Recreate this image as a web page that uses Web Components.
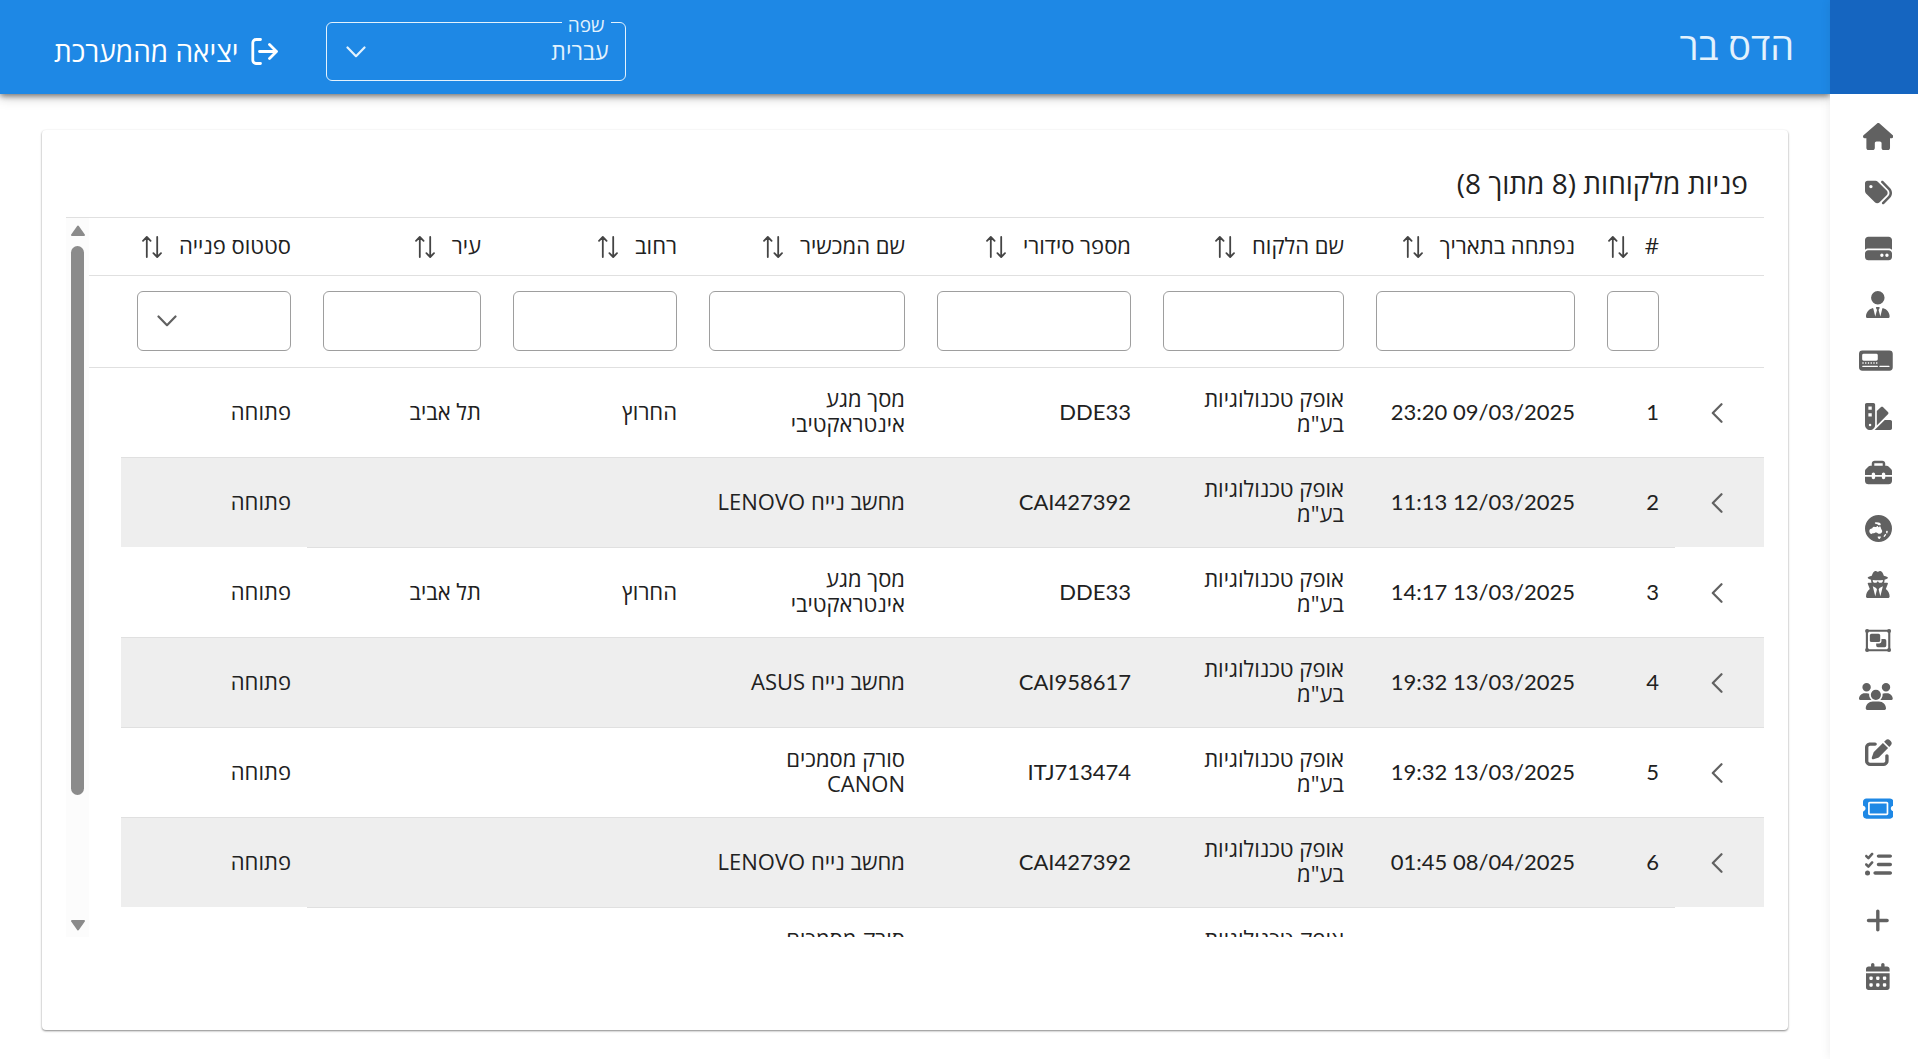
<!DOCTYPE html>
<html lang="he" dir="rtl">
<head>
<meta charset="utf-8">
<title>פניות מלקוחות</title>
<style>
body {
    margin: 0;
    font-family: "Open Sans", "Noto Sans", sans-serif;
    font-size: 22px;
    line-height: 25px;
    color: #212121;
    background: #fff;
}
</style>
</head>
<body>
<app-shell>
    <side-menu slot="menu"></side-menu>
    <top-bar slot="bar" user="הדס בר"></top-bar>
    <content-card heading="פניות מלקוחות (8 מתוך 8)">
        <ticket-table></ticket-table>
    </content-card>
</app-shell>

<script>
// name: [width, height, markup]; everything is painted with currentColor
const icons = {
    home: [576, 512, '<path d="M575.8 255.5c0 18-15 32.1-32 32.1h-32l.7 160.2c0 2.7-.2 5.4-.5 8.1V472c0 22.1-17.9 40-40 40H456c-1.1 0-2.2 0-3.3-.1c-1.4 .1-2.8 .1-4.2 .1H416 392c-22.1 0-40-17.9-40-40V448 384c0-17.7-14.3-32-32-32H256c-17.7 0-32 14.3-32 32v64 24c0 22.1-17.9 40-40 40H160 128.1c-1.5 0-3-.1-4.5-.2c-1.2 .1-2.4 .2-3.6 .2H104c-22.1 0-40-17.9-40-40V360c0-.9 0-1.9 .1-2.8V287.6H32c-18 0-32-14-32-32.1c0-9 3-17 10-24L266.4 8c7-7 15-8 22-8s15 2 21 7L564.8 231.5c8 7 12 15 11 24z"/>'],
    tags: [512, 512, '<path d="M345 39.1L472.8 168.4c52.4 53 52.4 138.2 0 191.2L360.8 472.9c-9.3 9.4-24.5 9.5-33.9 .2s-9.5-24.5-.2-33.9L438.6 325.9c33.9-34.3 33.9-89.4 0-123.7L310.9 72.9c-9.3-9.4-9.2-24.6 .2-33.9s24.6-9.2 33.9 .2zM0 229.5V80C0 53.5 21.5 32 48 32H197.5c17 0 33.3 6.7 45.3 18.7l168 168c25 25 25 65.5 0 90.5L277.3 442.7c-25 25-65.5 25-90.5 0l-168-168C6.7 262.7 0 246.5 0 229.5zM144 144a32 32 0 1 0 -64 0 32 32 0 1 0 64 0z"/>'],
    drive: [512, 512, '<path d="M0 96C0 60.7 28.7 32 64 32H448c35.3 0 64 28.7 64 64V280.4c-17-15.2-39.4-24.4-64-24.4H64c-24.6 0-47 9.2-64 24.4V96zM64 288H448c35.3 0 64 28.7 64 64v64c0 35.3-28.7 64-64 64H64c-35.3 0-64-28.7-64-64V352c0-35.3 28.7-64 64-64zM320 416a32 32 0 1 0 0-64 32 32 0 1 0 0 64zm128-32a32 32 0 1 0 -64 0 32 32 0 1 0 64 0z"/>'],
    tie: [448, 512, '<path d="M96 128a128 128 0 1 0 256 0A128 128 0 1 0 96 128zm94.5 200.2l18.6 31L175.8 483.1l-36-146.9c-2-8.1-9.8-13.4-17.9-11.3C51.9 342.4 0 405.8 0 481.3c0 17 13.8 30.7 30.7 30.7H162.5c0 0 0 0 .1 0H168 280h5.5c0 0 0 0 .1 0H417.3c17 0 30.7-13.8 30.7-30.7c0-75.5-51.9-138.9-121.9-156.4c-8.1-2-15.9 3.3-17.9 11.3l-36 146.9L238.9 359.2l18.6-31c6.4-10.7-1.3-24.2-13.7-24.2H224 204.3c-12.4 0-20.1 13.6-13.7 24.2z"/>'],
    device: [640, 512, '<path fill-rule="evenodd" d="M64 64H576a64 64 0 0 1 64 64V384a64 64 0 0 1-64 64H64a64 64 0 0 1-64-64V128a64 64 0 0 1 64-64zM88 128a28 28 0 0 0-28 28v76a28 28 0 0 0 28 28H328a28 28 0 0 0 28-28v-76a28 28 0 0 0-28-28zM64 288h24v28H64zm52 0h24v28h-24zm52 0h24v28h-24zm52 0h24v28h-24zm52 0h24v28h-24zm52 0h24v28h-24zM72 354a12 12 0 0 0 0 26H348a12 12 0 0 0 0-26zm324 0a12 12 0 0 0 0 26H568a12 12 0 0 0 0-26z"/>'],
    swatch: [512, 512, '<path d="M0 32C0 14.3 14.3 0 32 0H160c17.7 0 32 14.3 32 32V416c0 53-43 96-96 96s-96-43-96-96V32zM223.6 425.9c.3-3.3 .4-6.6 .4-9.9V154l75.4-75.4c12.5-12.5 32.8-12.5 45.3 0l90.5 90.5c12.5 12.5 12.5 32.8 0 45.3L223.6 425.9zM182.8 512l192-192H480c17.7 0 32 14.3 32 32V480c0 17.7-14.3 32-32 32H182.8zM128 64H64v64h64V64zM64 192v64h64V192H64zM96 440a24 24 0 1 0 0-48 24 24 0 1 0 0 48z"/>'],
    toolbox: [512, 512, '<path d="M176 88v40H336V88c0-4.4-3.6-8-8-8H184c-4.4 0-8 3.6-8 8zm-48 40V88c0-30.9 25.1-56 56-56H328c30.9 0 56 25.1 56 56v40h28.1c12.7 0 24.9 5.1 33.9 14.1l51.9 51.9c9 9 14.1 21.2 14.1 33.9V304H384V288c0-17.7-14.3-32-32-32s-32 14.3-32 32v16H192V288c0-17.7-14.3-32-32-32s-32 14.3-32 32v16H0V227.9c0-12.7 5.1-24.9 14.1-33.9l51.9-51.9c9-9 21.2-14.1 33.9-14.1H128zM0 416V336H128v16c0 17.7 14.3 32 32 32s32-14.3 32-32V336H320v16c0 17.7 14.3 32 32 32s32-14.3 32-32V336H512v80c0 35.3-28.7 64-64 64H64c-35.3 0-64-28.7-64-64z"/>'],
    globe: [512, 512, '<path fill-rule="evenodd" d="M256 0a256 256 0 1 1 0 512a256 256 0 1 1 0-512zM186 150c0-10 10-14 22-12l52 6c20 4 34 14 38 30c2 10-4 18-14 20l-24-2c-12 0-16-14-28-18l-34-8c-8-2-12-8-12-16zM84 290c6-18 24-26 44-32c16-6 18-30 40-34c20-4 24 10 42 4c10-4 16-20 28-18s10 24 24 24c10 0 10-24 22-22c16 4 16 44 32 66c12 16 12 34 4 50c-12 22-36 30-62 28c-18-2-24-20-44-22c-22-2-36 14-60 14c-14 0-20 14-36 12c-26-4-42-44-34-70zM250 410h40c10 0 14 10 8 18l-16 24c-8 8-20 6-24-4l-16-22c-4-8 0-16 8-16zM412 300c10-4 22 0 20 12l-8 32c-4 10-20 8-22-2l-2-26c0-8 4-14 12-16zM394 362c10 4 8 14 2 22l-24 30c-8 8-22 2-20-10c2-10 26-46 42-42z"/>'],
    secret: [448, 512, '<path d="M224 16c-6.7 0-10.8-2.8-15.5-6.1C201.9 5.4 194 0 176 0c-30.5 0-52 43.7-66 89.4C62.7 98.1 32 112.2 32 128c0 14.3 25 27.1 64.6 35.9c-.4 4-.6 8-.6 12.1c0 17 3.3 33.2 9.3 48H45.4C38 224 32 230 32 237.4c0 1.7 .3 3.4 1 5l38.8 96.9C28.2 371.8 0 423.8 0 482.3C0 498.7 13.3 512 29.7 512H418.3c16.4 0 29.7-13.3 29.7-29.7c0-58.5-28.2-110.4-71.7-143L415 242.4c.6-1.6 1-3.3 1-5c0-7.4-6-13.4-13.4-13.4H342.7c6-14.8 9.3-31 9.3-48c0-4.1-.2-8.1-.6-12.1C391 155.1 416 142.3 416 128c0-15.8-30.7-29.9-78-38.6C324 43.7 302.5 0 272 0c-18 0-25.9 5.4-32.5 9.9c-4.8 3.3-8.8 6.1-15.5 6.1zm56 208H267.6c-16.5 0-31.1-10.6-36.3-26.2c-2.3-7-12.2-7-14.5 0c-5.2 15.6-19.9 26.2-36.3 26.2H168c-22.1 0-40-17.9-40-40V169.6c28.2 4.1 61 6.4 96 6.4s67.8-2.3 96-6.4V184c0 22.1-17.9 40-40 40zm-88 96l16 32L176 480 128 288l64 32zm128-32L272 480 240 352l16-32 64-32z"/>'],
    group: [512, 512, '<path fill="none" stroke="currentColor" stroke-width="40" d="M36 72H460V440H36z"/><circle cx="40" cy="76" r="38"/><circle cx="456" cy="76" r="38"/><circle cx="40" cy="436" r="38"/><circle cx="456" cy="436" r="38"/><rect x="92" y="130" width="196" height="156" rx="32"/><path d="M312 228h60a32 32 0 0 1 32 32v92a32 32 0 0 1-32 32H244a32 32 0 0 1-32-32v-40h60a40 40 0 0 0 40-40z"/>'],
    users: [640, 512, '<path d="M144 0a80 80 0 1 1 0 160A80 80 0 1 1 144 0zM512 0a80 80 0 1 1 0 160A80 80 0 1 1 512 0zM0 298.7C0 239.8 47.8 192 106.7 192h42.7c15.9 0 31 3.5 44.6 9.7c-1.3 7.2-1.9 14.7-1.9 22.3c0 38.2 16.8 72.5 43.3 96c-.2 0-.4 0-.7 0H21.3C9.6 320 0 310.4 0 298.7zM405.3 320c-.2 0-.4 0-.7 0c26.6-23.5 43.3-57.8 43.3-96c0-7.6-.7-15-1.9-22.3c13.6-6.3 28.7-9.7 44.6-9.7h42.7C592.2 192 640 239.8 640 298.7c0 11.8-9.6 21.3-21.3 21.3H405.3zM224 224a96 96 0 1 1 192 0 96 96 0 1 1 -192 0zM128 485.3C128 411.7 187.7 352 261.3 352H378.7C452.3 352 512 411.7 512 485.3c0 14.7-11.9 26.7-26.7 26.7H154.7c-14.7 0-26.7-11.9-26.7-26.7z"/>'],
    edit: [512, 512, '<path d="M471.6 21.7c-21.9-21.9-57.3-21.9-79.2 0L362.3 51.7l97.9 97.9 30.1-30.1c21.9-21.9 21.9-57.3 0-79.2L471.6 21.7zm-299.2 220c-6.1 6.1-10.8 13.6-13.5 21.9l-29.6 88.8c-2.9 8.6-.6 18.1 5.8 24.6s15.9 8.7 24.6 5.8l88.8-29.6c8.2-2.7 15.7-7.4 21.9-13.5L437.7 172.3 339.7 74.3 172.4 241.7zM96 64C43 64 0 107 0 160V416c0 53 43 96 96 96H352c53 0 96-43 96-96V320c0-17.7-14.3-32-32-32s-32 14.3-32 32v96c0 17.7-14.3 32-32 32H96c-17.7 0-32-14.3-32-32V160c0-17.7 14.3-32 32-32h96c17.7 0 32-14.3 32-32s-14.3-32-32-32H96z"/>'],
    ticket: [576, 512, '<path fill-rule="evenodd" d="M64 64C28.7 64 0 92.7 0 128v64c0 8.8 7.4 15.7 15.7 18.6C34.5 217.1 48 235 48 256s-13.5 38.9-32.3 45.4C7.4 304.3 0 311.2 0 320v64c0 35.3 28.7 64 64 64H512c35.3 0 64-28.7 64-64V320c0-8.8-7.4-15.7-15.7-18.6C541.5 294.9 528 277 528 256s13.5-38.9 32.3-45.4c8.3-2.9 15.7-9.8 15.7-18.6V128c0-35.3-28.7-64-64-64H64zm64 96V352H448V160zM96 160c0-17.7 14.3-32 32-32H448c17.7 0 32 14.3 32 32V352c0 17.7-14.3 32-32 32H128c-17.7 0-32-14.3-32-32V160z"/>'],
    checks: [512, 512, '<path d="M152.1 38.2c9.9 8.9 10.7 24 1.8 33.9l-72 80c-4.4 4.9-10.6 7.8-17.2 7.9s-12.9-2.4-17.6-7L7 113C-2.3 103.6-2.3 88.4 7 79s24.6-9.4 33.9 0l22.1 22.1 55.1-61.2c8.9-9.9 24-10.7 33.9-1.8zm0 160c9.9 8.9 10.7 24 1.8 33.9l-72 80c-4.4 4.9-10.6 7.8-17.2 7.9s-12.9-2.4-17.6-7L7 273c-9.4-9.4-9.4-24.6 0-33.9s24.6-9.4 33.9 0l22.1 22.1 55.1-61.2c8.9-9.9 24-10.7 33.9-1.8zM224 96c0-17.7 14.3-32 32-32H480c17.7 0 32 14.3 32 32s-14.3 32-32 32H256c-17.7 0-32-14.3-32-32zm0 160c0-17.7 14.3-32 32-32H480c17.7 0 32 14.3 32 32s-14.3 32-32 32H256c-17.7 0-32-14.3-32-32zM160 416c0-17.7 14.3-32 32-32H480c17.7 0 32 14.3 32 32s-14.3 32-32 32H192c-17.7 0-32-14.3-32-32zM48 368a48 48 0 1 1 0 96 48 48 0 1 1 0-96z"/>'],
    plus: [448, 512, '<path d="M256 80c0-17.7-14.3-32-32-32s-32 14.3-32 32V224H48c-17.7 0-32 14.3-32 32s14.3 32 32 32H192V432c0 17.7 14.3 32 32 32s32-14.3 32-32V288H400c17.7 0 32-14.3 32-32s-14.3-32-32-32H256V80z"/>'],
    calendar: [448, 512, '<path d="M128 0c17.7 0 32 14.3 32 32V64H288V32c0-17.7 14.3-32 32-32s32 14.3 32 32V64h48c26.5 0 48 21.5 48 48v48H0V112C0 85.5 21.5 64 48 64H96V32c0-17.7 14.3-32 32-32zM0 192H448V464c0 26.5-21.5 48-48 48H48c-26.5 0-48-21.5-48-48V192zm64 80v32c0 8.8 7.2 16 16 16h32c8.8 0 16-7.2 16-16V272c0-8.8-7.2-16-16-16H80c-8.8 0-16 7.2-16 16zm128 0v32c0 8.8 7.2 16 16 16h32c8.8 0 16-7.2 16-16V272c0-8.8-7.2-16-16-16H208c-8.8 0-16 7.2-16 16zm144-16c-8.8 0-16 7.2-16 16v32c0 8.8 7.2 16 16 16h32c8.8 0 16-7.2 16-16V272c0-8.8-7.2-16-16-16H336zM64 400v32c0 8.8 7.2 16 16 16h32c8.8 0 16-7.2 16-16V400c0-8.8-7.2-16-16-16H80c-8.8 0-16 7.2-16 16zm144-16c-8.8 0-16 7.2-16 16v32c0 8.8 7.2 16 16 16h32c8.8 0 16-7.2 16-16V400c0-8.8-7.2-16-16-16H208zm112 16v32c0 8.8 7.2 16 16 16h32c8.8 0 16-7.2 16-16V400c0-8.8-7.2-16-16-16H336c-8.8 0-16 7.2-16 16z"/>'],
    logout: [27, 27, '<path fill="none" stroke="currentColor" stroke-width="2.8" stroke-linecap="round" stroke-linejoin="round" d="M9.5 1.5H5A3.2 3.2 0 0 0 1.8 4.7V22.3A3.2 3.2 0 0 0 5 25.5H9.5M8.5 13.5H25.5M18.5 6.5l7 7-7 7"/>'],
    down: [20, 12, '<path fill="none" stroke="currentColor" stroke-width="2.2" stroke-linecap="round" stroke-linejoin="round" d="M1.5 1.5L10 10.2L18.5 1.5"/>'],
    back: [12, 20, '<path fill="none" stroke="currentColor" stroke-width="2.2" stroke-linecap="round" stroke-linejoin="round" d="M10.5 1.2L1.8 10L10.5 18.8"/>'],
    sort: [20, 22, '<path fill="none" stroke="currentColor" stroke-width="1.8" stroke-linecap="round" stroke-linejoin="round" d="M4.8 21V1.2M1 4.8L4.8 1L8.6 4.8M15.2 1V20.8M11.4 17.2L15.2 21L19 17.2"/>'],
};

class AppIcon extends HTMLElement {
    connectedCallback() {
        const [w, h, body] = icons[this.getAttribute('name')];
        this.attachShadow({mode: 'open'}).innerHTML = `
<style>
:host { display: inline-flex; flex: none; height: 27px; }
svg { display: block; height: 100%; fill: currentColor; }
</style>
<svg viewBox="0 0 ${w} ${h}" aria-hidden="true">${body}</svg>`;
    }
}
customElements.define('app-icon', AppIcon);

class AppShell extends HTMLElement {
    connectedCallback() {
        this.attachShadow({mode: 'open'}).innerHTML = `
<style>
:host { display: grid; grid-template-columns: 88px minmax(0, 1fr); min-height: 100vh; }
.page { display: flex; flex-direction: column; }
main { display: flex; flex: 1; padding: 36px 42px 29px; }
::slotted(content-card) { flex: 1; min-width: 0; }
</style>
<slot name="menu"></slot>
<div class="page">
    <slot name="bar"></slot>
    <main><slot></slot></main>
</div>`;
    }
}
customElements.define('app-shell', AppShell);

class SideMenu extends HTMLElement {
    items = [
        ['home', 'בית'], ['tags', 'תגיות'], ['drive', 'מכשירים'], ['tie', 'לקוחות'],
        ['device', 'דגמים'], ['swatch', 'קטלוג'], ['toolbox', 'כלים'], ['globe', 'אזורים'],
        ['secret', 'סוכנים'], ['group', 'קבוצות'], ['users', 'משתמשים'], ['edit', 'עריכה'],
        ['ticket', 'פניות'], ['checks', 'משימות'], ['plus', 'חדש'], ['calendar', 'יומן'],
    ];

    connectedCallback() {
        this.attachShadow({mode: 'open'}).innerHTML = `
<style>
:host {
    display: block;
    position: relative;
    z-index: 2;
    background: #fff;
    box-shadow: 0 0 10px rgba(0, 0, 0, .08);
    color: #616161;
}
.brand { height: 94px; background: #1565c0; }
nav { display: flex; flex-direction: column; padding: 14px 25px; }
a {
    display: flex;
    justify-content: safe center;
    align-items: center;
    width: 30px;
    height: 56px;
    color: inherit;
}
a[aria-current] { color: #1e88e5; }
</style>
<div class="brand"></div>
<nav>
${this.items.map(([icon, label]) => `<a href="#${icon}" aria-label="${label}"${icon === 'ticket' ? ' aria-current="page"' : ''}><app-icon name="${icon}"></app-icon></a>`).join('')}
</nav>`;
    }
}
customElements.define('side-menu', SideMenu);

class TopBar extends HTMLElement {
    connectedCallback() {
        this.attachShadow({mode: 'open'}).innerHTML = `
<style>
:host {
    display: flex;
    align-items: center;
    gap: 48px;
    height: 94px;
    padding: 0 36px 0 54px;
    background: #1e88e5;
    color: #fff;
    box-shadow: 0 2px 6px rgba(0, 0, 0, .5), 0 4px 12px rgba(0, 0, 0, .15);
}
.user { flex: 1; padding-bottom: 4px; font-size: 38px; color: #e3f2fd; }
button {
    display: flex;
    align-items: center;
    gap: 12px;
    padding: 8px 0 0;
    border: 0;
    background: none;
    color: inherit;
    font: inherit;
    font-size: 28px;
}
</style>
<div class="user">${this.getAttribute('user')}</div>
<language-select></language-select>
<button type="button"><app-icon name="logout"></app-icon><span>יציאה מהמערכת</span></button>`;
    }
}
customElements.define('top-bar', TopBar);

class LanguageSelect extends HTMLElement {
    connectedCallback() {
        this.attachShadow({mode: 'open'}).innerHTML = `
<style>
:host { display: block; position: relative; width: 300px; margin-top: 9px; color: #e3f2fd; }
select {
    display: block;
    box-sizing: border-box;
    width: 100%;
    height: 59px;
    padding: 0 16px 0 50px;
    border: 1px solid #e3f2fd;
    border-radius: 6px;
    background: none;
    color: inherit;
    font: inherit;
    font-size: 23px;
    appearance: none;
}
label {
    position: absolute;
    top: -9px;
    right: 15px;
    padding: 0 6px;
    background: #1e88e5;
    font-size: 19px;
}
app-icon { position: absolute; left: 20px; top: 24px; height: 12px; pointer-events: none; }
</style>
<label for="lang">שפה</label>
<select id="lang"><option>עברית</option><option>English</option></select>
<app-icon name="down"></app-icon>`;
    }
}
customElements.define('language-select', LanguageSelect);

class ContentCard extends HTMLElement {
    connectedCallback() {
        this.attachShadow({mode: 'open'}).innerHTML = `
<style>
:host {
    display: block;
    box-sizing: border-box;
    padding: 24px;
    border-radius: 4px;
    background: #fff;
    box-shadow: 0 1px 2px rgba(0, 0, 0, .4), 0 1px 3px rgba(0, 0, 0, .1);
}
h1 { margin: 0; padding: 13px 16px 18px; font-size: 28px; font-weight: 400; line-height: 32px; }
</style>
<h1>${this.getAttribute('heading')}</h1>
<slot></slot>`;
    }
}
customElements.define('content-card', ContentCard);

class ScrollRail extends HTMLElement {
    connectedCallback() {
        this.attachShadow({mode: 'open'}).innerHTML = `
<style>
:host {
    display: flex;
    flex-direction: column;
    align-items: center;
    gap: 10px;
    box-sizing: border-box;
    flex: none;
    width: 23px;
    padding: 7px 0 6px;
    background: #fcfcfc;
}
svg { display: block; fill: #8b8b8b; stroke: #8b8b8b; stroke-width: 2; stroke-linejoin: round; }
.thumb { width: 13px; height: 549px; border-radius: 7px; background: #8b8b8b; }
.rest { flex: 1; }
</style>
<svg width="14" height="11"><path d="M7 1.5L1 10H13z"/></svg>
<div class="thumb"></div>
<div class="rest"></div>
<svg width="14" height="11"><path d="M7 9.5L1 1H13z"/></svg>`;
    }
}
customElements.define('scroll-rail', ScrollRail);

const columns = [
    ['#', 84], ['נפתחה בתאריך', 231], ['שם הלקוח', 213], ['מספר סידורי', 226],
    ['שם המכשיר', 228], ['רחוב', 196], ['עיר', 190], ['סטטוס פנייה', 186],
];
const client = 'אופק טכנולוגיות בע"מ';
const tickets = [
    ['1', '09/03/2025 23:20', client, 'DDE33', 'מסך מגע אינטראקטיבי', 'החרוץ', 'תל אביב', 'פתוחה'],
    ['2', '12/03/2025 11:13', client, 'CAI427392', 'מחשב נייח LENOVO', '', '', 'פתוחה'],
    ['3', '13/03/2025 14:17', client, 'DDE33', 'מסך מגע אינטראקטיבי', 'החרוץ', 'תל אביב', 'פתוחה'],
    ['4', '13/03/2025 19:32', client, 'CAI958617', 'מחשב נייח ASUS', '', '', 'פתוחה'],
    ['5', '13/03/2025 19:32', client, 'ITJ713474', 'סורק מסמכים CANON', '', '', 'פתוחה'],
    ['6', '08/04/2025 01:45', client, 'CAI427392', 'מחשב נייח LENOVO', '', '', 'פתוחה'],
    ['7', '', client, '', 'סורק מסמכים CANON', '', '', 'פתוחה'],
];

class TicketTable extends HTMLElement {
    connectedCallback() {
        this.attachShadow({mode: 'open'}).innerHTML = `
<style>
:host {
    display: flex;
    height: calc(100vh - 340px);
    border-top: 1px solid #e0e0e0;
    overflow: hidden;
}
.view { flex: 1; min-width: 0; overflow: hidden; }
table { width: 100%; table-layout: fixed; border-collapse: separate; border-spacing: 0; }
th, td {
    box-sizing: border-box;
    border-bottom: 1px solid #e0e0e0;
    text-align: start;
    font-weight: 400;
}
th { padding: 15px 16px 17px; }
.filters td { padding: 15px 16px 16px; }
tbody td { height: 90px; padding: 18px 16px 21px; vertical-align: middle; }
tbody tr:nth-child(even) td { background: #eee; background-clip: padding-box; }
tbody tr:nth-child(4n+2) td:is(:first-child, :nth-child(9)) { border-color: transparent; }
tbody td.end:last-child { border: 0; background: none; }
.latin { font-family: Lato, "Open Sans", sans-serif; white-space: nowrap; }
button { padding: 0; border: 0; background: none; color: inherit; font: inherit; }
th button { display: flex; align-items: end; gap: 17px; white-space: nowrap; }
th app-icon { height: 22px; color: #444; }
.open { display: flex; margin: 4px auto 0 20px; color: #616161; }
.open app-icon { height: 20px; }
input, select {
    display: block;
    box-sizing: border-box;
    width: 100%;
    height: 60px;
    padding: 0 12px;
    border: 1px solid #9e9e9e;
    border-radius: 6px;
    background: #fff;
    font: inherit;
    appearance: none;
}
.pick { position: relative; color: #616161; }
.pick app-icon { position: absolute; left: 20px; top: 24px; height: 12px; pointer-events: none; }
</style>
<div class="view">
<table>
<colgroup><col style="width:89px">${columns.map(([, w]) => `<col style="width:${w}px">`).join('')}<col style="width:32px"></colgroup>
<thead>
<tr><th></th>${columns.map(([name]) => `<th><button type="button">${name}<app-icon name="sort"></app-icon></button></th>`).join('')}<th></th></tr>
<tr class="filters"><td></td>${columns.map(([name], i) => `<td>${this.filter(name, i)}</td>`).join('')}<td></td></tr>
</thead>
<tbody>${tickets.map(row => this.row(row)).join('')}</tbody>
</table>
</div>
<scroll-rail></scroll-rail>`;
    }

    filter(name, i) {
        if (i === columns.length - 1) {
            return `<div class="pick"><select aria-label="${name}"><option></option><option>פתוחה</option></select><app-icon name="down"></app-icon></div>`;
        }
        return `<input type="text" aria-label="${name}">`;
    }

    row(cells) {
        const latin = [0, 1, 3];
        return `<tr>
<td><button class="open" type="button" aria-label="פתח"><app-icon name="back"></app-icon></button></td>
${cells.map((text, i) => `<td${latin.includes(i) ? ' class="latin"' : ''}>${text}</td>`).join('')}
<td class="end"></td>
</tr>`;
    }
}
customElements.define('ticket-table', TicketTable);
</script>
</body>
</html>
